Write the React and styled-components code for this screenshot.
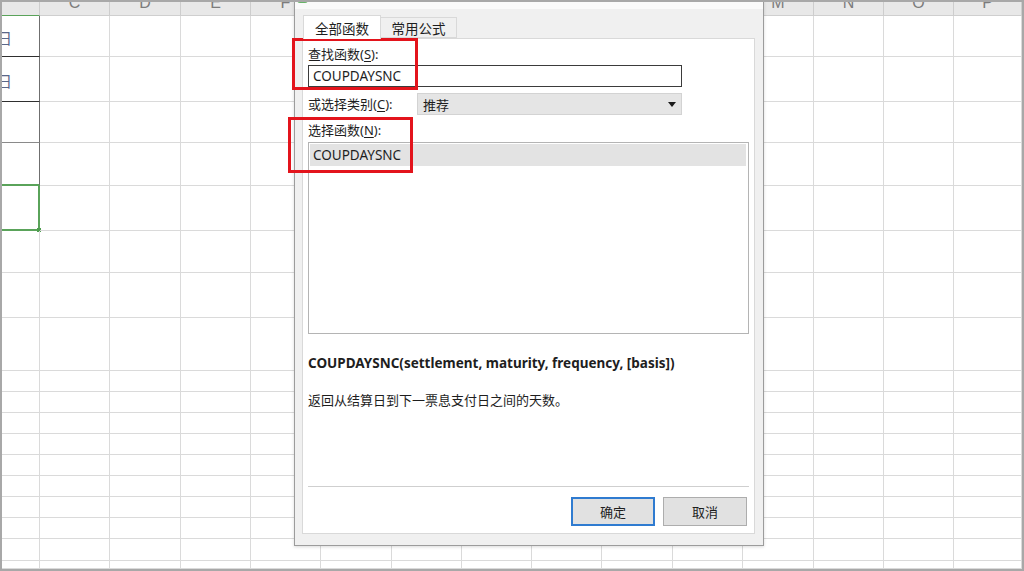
import styled, { createGlobalStyle } from 'styled-components';

const GlobalStyle = createGlobalStyle`
  html, body {
    margin: 0;
    padding: 0;
    background: #ffffff;
  }
  * {
    box-sizing: border-box;
  }
`;

const COLS = [38, 70, 71, 70, 70, 71, 70, 70, 70, 71, 70, 71, 70, 70, 68];
const COL_NAMES = ['', 'C', 'D', 'E', 'F', 'G', 'H', 'I', 'J', 'K', 'L', 'M', 'N', 'O', 'P'];
const ROWS = [41, 45, 41, 43, 45, 42, 45, 53, 21, 21, 21, 21, 21, 21, 21, 21, 22, 8];

const UI_FONT = '"Noto Sans", "Noto Sans CJK SC", sans-serif';

const Frame = styled.div`
  position: relative;
  width: 1024px;
  height: 571px;
  border: 2px solid #a8a8a8;
  overflow: hidden;
  background: #ffffff;
`;

const Sheet = styled.div`
  display: grid;
  grid-template-columns: ${COLS.map((w) => `${w}px`).join(' ')};
  grid-template-rows: 14px ${ROWS.map((h) => `${h}px`).join(' ')};
`;

const HeadCell = styled.div`
  display: flex;
  align-items: flex-end;
  justify-content: center;
  overflow: hidden;
  background: #e8e8e8;
  border-right: 1px solid #cdcdcd;
  border-bottom: 1px solid ${(p) => (p.$active ? '#5aa35a' : '#cfcfcf')};
`;

const HeadLabel = styled.span`
  font-family: "Liberation Sans", sans-serif;
  font-size: 16px;
  line-height: 16px;
  color: #7c7c7c;
  margin-bottom: 4px;
`;

const Cell = styled.div`
  position: relative;
  display: flex;
  align-items: center;
  border-right: ${(p) => p.$right || '1px solid #dadada'};
  border-bottom: ${(p) => p.$bottom || '1px solid #dadada'};
`;

const CellText = styled.span`
  font-family: "Noto Sans CJK SC", sans-serif;
  font-size: 15px;
  color: #5b6788;
  margin-left: -5px;
  padding-top: 3px;
`;

const FillHandle = styled.span`
  position: absolute;
  right: -3px;
  bottom: -3px;
  width: 4px;
  height: 4px;
  background: #4f9d4f;
`;

const Dialog = styled.div`
  position: absolute;
  left: 292px;
  top: -2px;
  width: 470px;
  height: 546px;
  display: flex;
  flex-direction: column;
  background: #f0f0f0;
  border: 1px solid #9c9c9c;
  border-top: none;
  box-shadow: 0 1px 3px rgba(0, 0, 0, 0.15);
  font-family: ${UI_FONT};
  font-size: 13px;
  color: #1e1e1e;
`;

const TitleStrip = styled.div`
  height: 9px;
  background: #fafafa;
  padding-left: 2px;
`;

const AppBadge = styled.span`
  display: block;
  width: 11px;
  height: 3px;
  background: #68b468;
  border-radius: 0 0 4px 4px;
`;

const Body = styled.div`
  flex: 1;
  display: flex;
  flex-direction: column;
  padding: 6px 8px 11px 7px;
`;

const Tabs = styled.div`
  display: flex;
  align-items: flex-end;
  position: relative;
  z-index: 1;
  padding-left: 1px;
`;

const Tab = styled.div`
  display: flex;
  align-items: center;
  justify-content: center;
  width: ${(p) => (p.$active ? 78 : 76)}px;
  height: ${(p) => (p.$active ? 24 : 21)}px;
  margin-bottom: ${(p) => (p.$active ? -1 : 0)}px;
  background: ${(p) => (p.$active ? '#ffffff' : '#f0f0f0')};
  border: 1px solid #d9d9d9;
  border-bottom: ${(p) => (p.$active ? 'none' : '1px solid #d9d9d9')};
  border-left: ${(p) => (p.$active ? '1px solid #d9d9d9' : 'none')};
  font-family: "Noto Sans CJK SC", sans-serif;
  font-size: 13.5px;
  padding-top: ${(p) => (p.$active ? 1 : 0)}px;
`;

const Panel = styled.div`
  flex: 1;
  display: flex;
  flex-direction: column;
  background: #ffffff;
  border: 1px solid #d9d9d9;
  padding: 6px 5px 7px 5px;
`;

const Label = styled.div`
  line-height: 18px;
  margin-top: ${(p) => p.$gap || 0}px;
  white-space: nowrap;
`;

const Key = styled.span`
  text-decoration: underline;
  text-underline-offset: 2px;
`;

const SearchInput = styled.div`
  width: 374px;
  height: 22px;
  margin-top: 2px;
  display: flex;
  align-items: center;
  padding-left: 4px;
  border: 1px solid #3b3b3b;
  background: #ffffff;
  font-size: 13.5px;
`;

const FieldRow = styled.div`
  display: flex;
  align-items: center;
  margin-top: 6px;
`;

const FieldLabel = styled.div`
  width: 109px;
  line-height: 18px;
  white-space: nowrap;
`;

const Select = styled.div`
  width: 265px;
  height: 22px;
  display: flex;
  align-items: center;
  justify-content: space-between;
  padding: 0 5px 0 5px;
  background: #e5e5e5;
  border: 1px solid #d3d3d3;
`;

const ListBox = styled.div`
  height: 192px;
  margin-top: 3px;
  padding: 1px;
  border: 1px solid #b4b4b4;
  background: #ffffff;
`;

const ListItem = styled.div`
  height: 22px;
  display: flex;
  align-items: center;
  padding-left: 3px;
  margin-right: 1px;
  font-size: 13.5px;
  background: ${(p) => (p.$selected ? '#e3e3e3' : 'transparent')};
`;

const Signature = styled.div`
  margin-top: 20px;
  line-height: 18px;
  font-size: 13.5px;
  font-weight: bold;
  white-space: nowrap;
`;

const Description = styled.div`
  margin-top: 19px;
  line-height: 18px;
  font-family: "Noto Sans CJK SC", sans-serif;
  white-space: nowrap;
`;

const Separator = styled.div`
  margin-top: auto;
  height: 1px;
  background: #cfcfcf;
`;

const Buttons = styled.div`
  display: flex;
  justify-content: flex-end;
  gap: 8px;
  margin-top: 10px;
  padding-right: 2px;
`;

const Button = styled.div`
  width: 84px;
  height: 29px;
  display: flex;
  align-items: center;
  justify-content: center;
  background: #e1e1e1;
  border: ${(p) => (p.$primary ? '2px solid #2f7bd0' : '1px solid #adadad')};
  font-family: "Noto Sans CJK SC", sans-serif;
  font-size: 13px;
`;

const Callout = styled.div`
  position: absolute;
  left: ${(p) => p.$x}px;
  top: ${(p) => p.$y}px;
  width: ${(p) => p.$w}px;
  height: ${(p) => p.$h}px;
  border: 3px solid #e3141c;
  pointer-events: none;
`;

const firstColumnCell = (r) => {
  if (r === 0 || r === 1) return { $right: '1px solid #6f6f6f', $bottom: '1px solid #2f2f2f', text: '日' };
  if (r === 2) return { $right: '1px solid #6f6f6f', $bottom: '1px solid #8a8a8a' };
  if (r === 3) return { $right: '1px solid #6f6f6f', $bottom: '2px solid #5aa35a' };
  if (r === 4) return { $right: '2px solid #5aa35a', $bottom: '2px solid #5aa35a', handle: true };
  return {};
};

const ArrowDown = () => (
  <svg width="8" height="5" viewBox="0 0 8 5">
    <polygon points="0,0 8,0 4,5" fill="#1a1a1a" />
  </svg>
);

const App = () => {
  return (
    <>
      <GlobalStyle />
      <Frame>
        <Sheet>
          {COL_NAMES.map((name, i) => (
            <HeadCell key={`h${i}`} $active={i === 0}>
              <HeadLabel>{name}</HeadLabel>
            </HeadCell>
          ))}
          {ROWS.map((_, r) =>
            COLS.map((__, c) => {
              if (c === 0) {
                const { text, handle, ...borders } = firstColumnCell(r);
                return (
                  <Cell key={`${r}-${c}`} {...borders}>
                    {text && <CellText>{text}</CellText>}
                    {handle && <FillHandle />}
                  </Cell>
                );
              }
              return <Cell key={`${r}-${c}`} />;
            })
          )}
        </Sheet>

        <Dialog>
          <TitleStrip>
            <AppBadge />
          </TitleStrip>
          <Body>
            <Tabs>
              <Tab $active>全部函数</Tab>
              <Tab>常用公式</Tab>
            </Tabs>
            <Panel>
              <Label>
                查找函数(<Key>S</Key>):
              </Label>
              <SearchInput>COUPDAYSNC</SearchInput>
              <FieldRow>
                <FieldLabel>
                  或选择类别(<Key>C</Key>):
                </FieldLabel>
                <Select>
                  <span>推荐</span>
                  <ArrowDown />
                </Select>
              </FieldRow>
              <Label $gap={6}>
                选择函数(<Key>N</Key>):
              </Label>
              <ListBox>
                <ListItem $selected>COUPDAYSNC</ListItem>
              </ListBox>
              <Signature>COUPDAYSNC(settlement, maturity, frequency, [basis])</Signature>
              <Description>返回从结算日到下一票息支付日之间的天数。</Description>
              <Separator />
              <Buttons>
                <Button $primary>确定</Button>
                <Button>取消</Button>
              </Buttons>
            </Panel>
          </Body>
        </Dialog>

        <Callout $x={290} $y={36} $w={126} $h={52} />
        <Callout $x={286} $y={115} $w={125} $h={56} />
      </Frame>
    </>
  );
};

export default App;
